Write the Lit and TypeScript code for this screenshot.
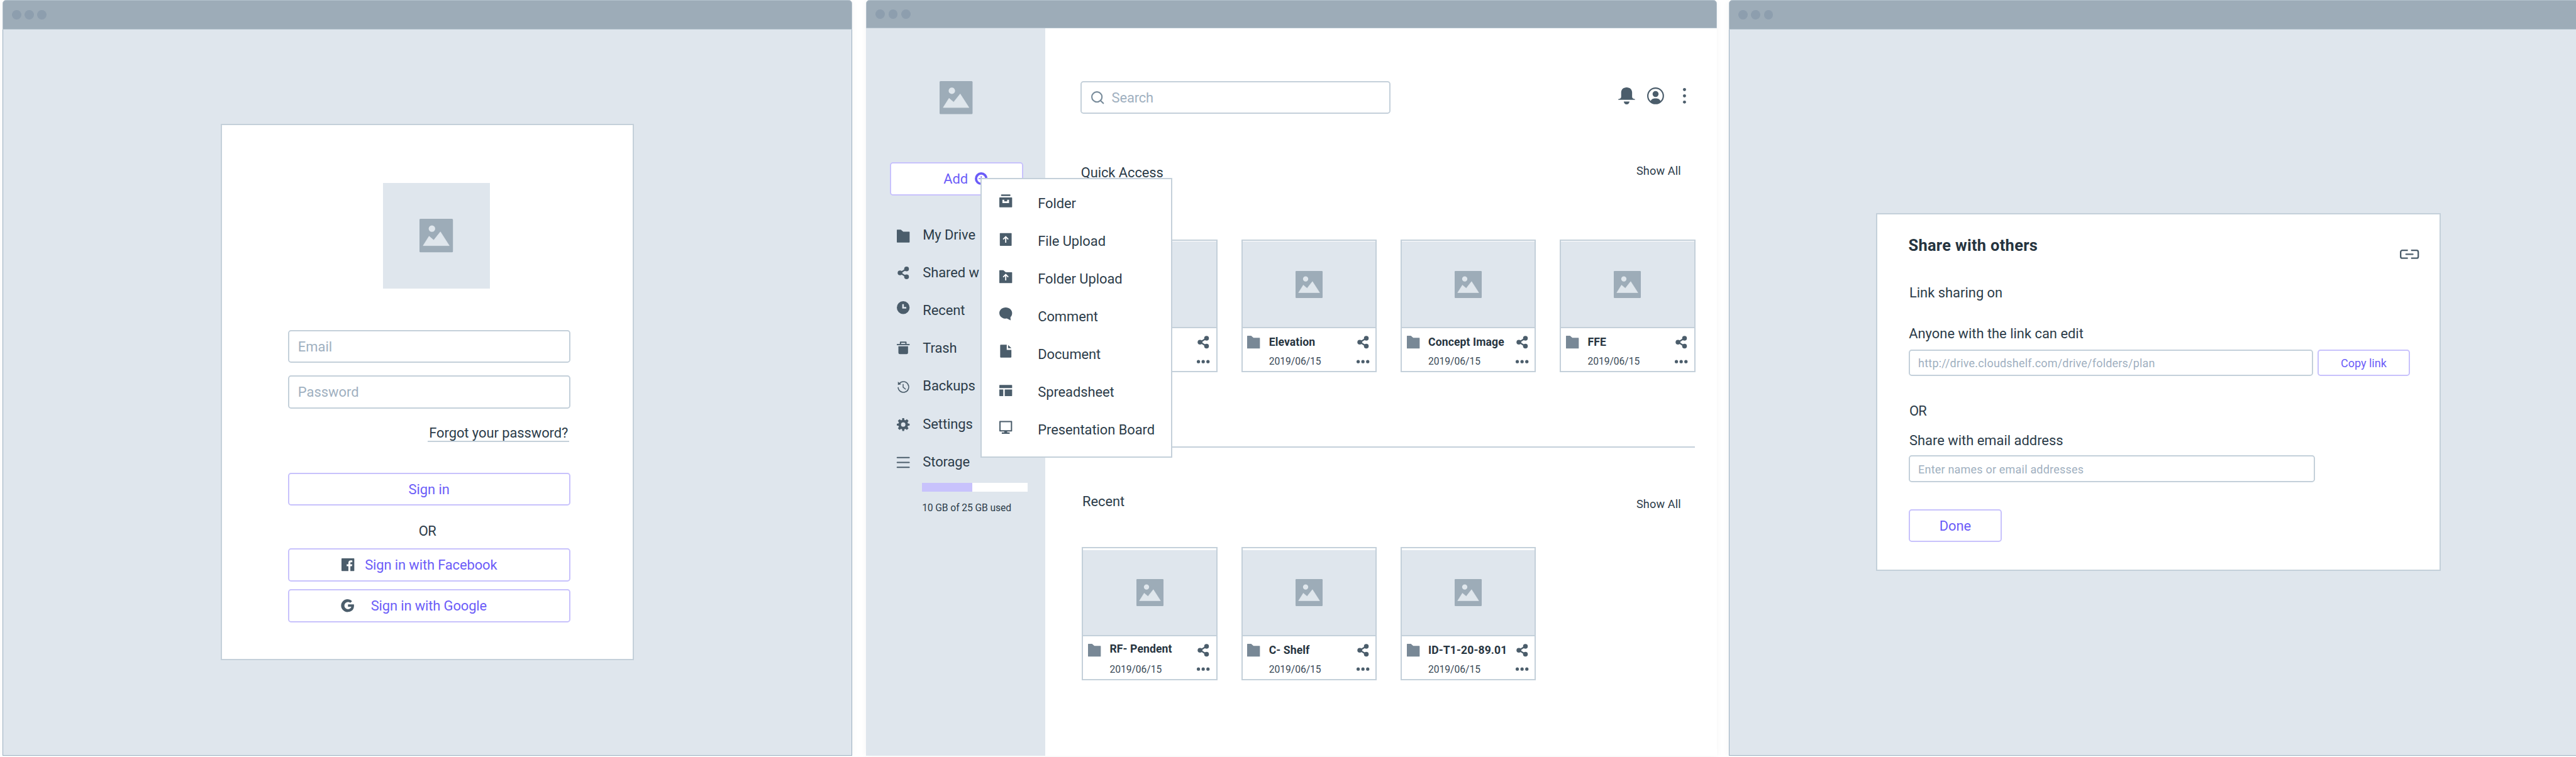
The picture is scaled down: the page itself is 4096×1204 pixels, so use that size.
import { LitElement, html, svg, unsafeCSS, nothing, TemplateResult, SVGTemplateResult } from "lit";
import { customElement, property } from "lit/decorators.js";

/** Board scale: "u" lengths in the style sheets are design pixels. */
const SCALE = 4096 / 5234;

function sheet(strings: TemplateStringsArray) {
  const text = strings.raw.join("");
  return unsafeCSS(
    text.replace(/(\d*\.?\d+)u\b/g, (_m, n) => `${(parseFloat(n) * SCALE).toFixed(3)}px`)
  );
}

const ICONS: Record<string, { box: string; art: SVGTemplateResult }> = {
  image: {
    box: "0 0 68 68",
    art: svg`<rect width="68" height="68" rx="2"/><circle cx="25.300" cy="20" r="6.600" fill="#dfe6ec"/>
      <path d="M7.500 54.500L19.500 35.500l9.500 8L42.500 26.500L60.500 54.500z" fill="#dfe6ec" stroke="#dfe6ec" stroke-width="1" stroke-linejoin="round"/>`,
  },
  folder: { box: "0 0 26 26", art: svg`<path d="M0 .8A.8.8 0 0 1 .8 0H8.200L13 4H25.200a.8.8 0 0 1 .8.8V25.200a.8.8 0 0 1-.8.8H.8a.8.8 0 0 1-.8-.8z"/>` },
  share: {
    box: "0 0 26 26",
    art: svg`<path d="M19.500 5L7 13l12.500 8" fill="none" stroke="currentColor" stroke-width="3"/>
      <circle cx="19.800" cy="5" r="4.800"/><circle cx="6.500" cy="13" r="4.800"/><circle cx="19.800" cy="21" r="4.800"/>`,
  },
  clock: { box: "0 0 26 26", art: svg`<path fill-rule="evenodd" d="M13 0a13 13 0 1 0 0 26a13 13 0 0 0 0-26zM11 6h3.300v5.700H19.200v3.200H11z"/>` },
  trash: {
    box: "0 0 26 26",
    art: svg`<path d="M0 5.300h26v2.400H0z"/><path d="M7.500 5.500V1.500h11v4" fill="none" stroke="currentColor" stroke-width="2.600" stroke-linejoin="round"/>
      <path d="M3.200 9.800H22.800V23a3 3 0 0 1-3 3H6.200a3 3 0 0 1-3-3z"/>`,
  },
  history: {
    box: "0 0 26 26",
    art: svg`<path d="M2.600 13.500A10.800 10.800 0 1 0 5 6.200" fill="none" stroke="currentColor" stroke-width="2"/>
      <path d="M2.200 2.200V8.800L9 7.600z"/><path d="M12.800 7v6.500l5.400 4.300" fill="none" stroke="currentColor" stroke-width="1.900"/>`,
  },
  gear: {
    box: "0 0 26 26",
    art: svg`<path fill-rule="evenodd" d="M11.200 0h3.600l.6 3.600 1.900.8L20.400 2l3.400 3.400-2.100 3.300.8 2 3.500.6v3.500l-3.500.6-.8 2 2.100 3.200-3.400 3.400-3.100-2.300-1.900.8-.6 3.500h-3.600l-.6-3.500-1.900-.8L5.600 24l-3.400-3.400 2.100-3.200-.8-2L0 14.800v-3.500l3.500-.6.8-2-2.100-3.300L5.600 2l3.100 2.400 1.900-.8zM13 8.600a4.500 4.500 0 1 0 0 9a4.500 4.500 0 0 0 0-9z"/>`,
  },
  bars: { box: "0 0 26 26", art: svg`<path d="M1 3.100H25M1 13H25M1 22.900H25" stroke="currentColor" stroke-width="2.700" stroke-linecap="round"/>` },
  archive: {
    box: "0 0 26 26",
    art: svg`<rect x="3.400" y="0" width="19.200" height="3" rx="1.200"/>
      <path fill-rule="evenodd" d="M1 6H25a1 1 0 0 1 1 1V25a1 1 0 0 1-1 1H1a1 1 0 0 1-1-1V7a1 1 0 0 1 1-1zM6.300 10.700v6.900H19.700V10.700H16v3.200H10V10.700z"/>`,
  },
  fileUp: {
    box: "0 0 26 26",
    art: svg`<rect x="1" y="0" width="24" height="26" rx="1"/><path d="M13 19.500V8.500M7.800 12.800L13 7.600l5.200 5.200" fill="none" stroke="#fff" stroke-width="2.300"/>`,
  },
  folderUp: {
    box: "0 0 26 26",
    art: svg`<path d="M0 .8A.8.8 0 0 1 .8 0H8.200L13 4H25.200a.8.8 0 0 1 .8.8V25.200a.8.8 0 0 1-.8.8H.8a.8.8 0 0 1-.8-.8z"/>
      <path d="M13 20.500V9.500M7.800 13.800L13 8.600l5.200 5.200" fill="none" stroke="#fff" stroke-width="2.300"/>`,
  },
  comment: { box: "0 0 26 26", art: svg`<path d="M13 0C5.800 0 0 5 0 11.300S5.800 22.600 13 22.600c.8 0 1.600-.1 2.300-.2L23 26l-.4-6.200C24.700 17.700 26 14.700 26 11.300C26 5 20.200 0 13 0z"/>` },
  doc: { box: "0 0 26 26", art: svg`<path d="M3 0H15V10.500H24.500V25a1 1 0 0 1-1 1H2.700a1 1 0 0 1-1-1V1.300A1.300 1.300 0 0 1 3 0zM17.800 .5L24.600 6.800H17.800z"/>` },
  table: { box: "0 0 26 26", art: svg`<path d="M1 1.700H25a1 1 0 0 1 1 1V8H0V2.700a1 1 0 0 1 1-1zM0 11H8V24.300H1a1 1 0 0 1-1-1zM11 11H26V23.300a1 1 0 0 1-1 1H11z"/>` },
  monitor: {
    box: "0 0 26 26",
    art: svg`<path fill-rule="evenodd" d="M1 0H25a1 1 0 0 1 1 1V20.400a1 1 0 0 1-1 1H16V23.300H21V26H5V23.300H10V21.400H1a1 1 0 0 1-1-1V1a1 1 0 0 1 1-1zM2.600 2.600V18.700H23.400V2.600z"/>`,
  },
  facebook: {
    box: "0 0 26 26",
    art: svg`<path fill-rule="evenodd" d="M1 0H25a1 1 0 0 1 1 1V25a1 1 0 0 1-1 1H18V16H21.300L21.900 12.100H18V9.600C18 8.400 18.500 7.900 19.700 7.900H22V4.400C21.300 4.300 20.300 4.200 19.200 4.200C16 4.200 14 6.100 14 9.300V12.100H10.500V16H14V26H1a1 1 0 0 1-1-1V1a1 1 0 0 1 1-1z"/>`,
  },
  google: {
    box: "0 0 26 26",
    art: svg`<path d="M13.200 10.700V15.400H20C19.100 18.300 16.800 20.300 13.200 20.300A7.300 7.300 0 1 1 17.900 7.500L21.500 4A13 13 0 1 0 13.200 26C21.500 26 26.500 19.800 25.300 10.700z"/>`,
  },
  plusCircle: {
    box: "0 0 26 26",
    art: svg`<circle cx="13" cy="13" r="10.500" fill="none" stroke="currentColor" stroke-width="4.900"/><path d="M13 7.800v10.400M7.800 13h10.400" stroke="currentColor" stroke-width="1.500"/>`,
  },
  search: {
    box: "0 0 26 26",
    art: svg`<circle cx="11.700" cy="11.700" r="10.300" fill="none" stroke="currentColor" stroke-width="2.700"/><path d="M18.700 18.700L24.700 24.700" stroke="currentColor" stroke-width="2.700" stroke-linecap="round"/>`,
  },
  bell: {
    box: "0 0 34 34",
    art: svg`<path d="M17 0C10.300 0 6 4.500 6 10.300V19C6 21.500 4.500 22.500 1 23.300C-.3 23.700-.2 25 1 25H33c1.200 0 1.300-1.300 0-1.700C29.500 22.500 28 21.500 28 19V10.300C28 4.500 23.700 0 17 0z"/>
      <path d="M11.200 28.300H22.800C22.300 31.500 20.300 34 17 34S11.700 31.500 11.200 28.300z"/>`,
  },
  user: {
    box: "0 0 34 34",
    art: svg`<circle cx="17" cy="17" r="15.600" fill="none" stroke="currentColor" stroke-width="2.700"/><circle cx="17" cy="13.300" r="6"/>
      <path d="M6.500 28.500C8.300 23.500 12 22 17 22s8.700 1.500 10.500 6.500C24.500 31.500 20.800 33 17 33S9.500 31.500 6.500 28.500z"/>`,
  },
  kebab: { box: "0 0 34 34", art: svg`<circle cx="17" cy="4.400" r="3.100"/><circle cx="17" cy="17.100" r="3.100"/><circle cx="17" cy="29.500" r="3.100"/>` },
  more: { box: "0 0 26 26", art: svg`<circle cx="3.300" cy="13" r="3.300"/><circle cx="13" cy="13" r="3.300"/><circle cx="22.700" cy="13" r="3.300"/>` },
  link: {
    box: "0 0 39 19",
    art: svg`<path d="M16.200 1.500H5a3.500 3.500 0 0 0-3.500 3.500V14A3.500 3.500 0 0 0 5 17.500H16.200M22.800 1.500H34A3.500 3.500 0 0 1 37.500 5V14A3.500 3.500 0 0 1 34 17.500H22.800" fill="none" stroke="currentColor" stroke-width="3"/>
      <path d="M12.500 9.500H26.500" stroke="currentColor" stroke-width="2.800" stroke-linecap="round"/>`,
  },
};

/** Draws a glyph; dy nudges the artwork inside its box. */
const icon = (name: string, cls = "", dy = 0): TemplateResult => html`
  <svg class="icon ${cls}" viewBox=${ICONS[name].box} fill="currentColor" aria-hidden="true">
    <g transform="translate(0 ${dy})">${ICONS[name].art}</g>
  </svg>`;

const shared = sheet`
  * { box-sizing: border-box; }
  .icon { display: block; flex: none; width: 26u; height: 26u; overflow: visible; color: #4b5d6b; }
  .field, .button {
    display: flex; align-items: center; height: 67u; border: 2.9u solid #c4d0da; border-radius: 6u;
    background: #fff; color: #9fb0c0; padding: 1.5u 18u 0; flex: none;
  }
  .button { border-color: #c8c2fc; color: #6b5cf8; justify-content: center; padding: 1.5u 0 0; }
`;

@customElement("browser-window")
export class BrowserWindow extends LitElement {
  static styles = [
    shared,
    sheet`
    :host { display: flex; flex-direction: column; flex: none; height: 1536u; border-radius: 7u 7u 0 0; box-shadow: 0 0 14u rgba(0, 0, 0, 0.045); }
    .bar {
      display: flex; align-items: center; gap: 6.800u; flex: none; height: 60u; padding-left: 18.500u;
      background: #9dacb8; border: 1.300u solid #b4c2cd; border-radius: 7u 7u 0 0;
    }
    :host([compact]) .bar { height: 58u; }
    .dot { width: 19u; height: 19u; border-radius: 50%; background: #8d9eae; }
    .body { flex: 1; position: relative; display: flex; min-height: 0; background: #dfe6ed; border: 1.300u solid #9db1c2; border-top: 0; }
    :host([compact]) .body { border: 0; background: #fff; }
  `,
  ];
  render() {
    return html`<div class="bar"><i class="dot"></i><i class="dot"></i><i class="dot"></i></div>
      <div class="body"><slot></slot></div>`;
  }
}

@customElement("sign-in-card")
export class SignInCard extends LitElement {
  static styles = [
    shared,
    sheet`
    :host { display: block; }
    .card {
      display: flex; flex-direction: column; width: 840.500u; height: 1090u; margin: 191.500u 0 0 442.300u;
      padding: 117.400u 127.600u 0 134.200u; background: #fff; border: 2.900u solid #c4d0da;
    }
    .logo { display: flex; flex: none; align-items: center; justify-content: center; width: 217u; height: 214.500u; margin: 0 0 85u 193.300u; background: #dfe6ed; }
    .logo .icon { width: 68u; height: 68u; color: #9dacb8; }
    .gap-a { margin-bottom: 25.100u; }
    .forgot {
      align-self: flex-end; width: 287.700u; margin: 35.400u 1.600u 62u 0; line-height: 31u; color: #2c3c49;
      text-align: center; white-space: nowrap; border-bottom: 2.900u solid #c4d0da; letter-spacing: -0.080u;
    }
    .or { margin: 34.800u 7u 20u 0; line-height: 32u; text-align: center; color: #2c3c49; letter-spacing: -0.700u; }
    .social { justify-content: flex-start; padding-left: 107u; gap: 21u; margin-bottom: 16u; letter-spacing: -0.150u; }
    .google { gap: 33u; }
    .social .icon { margin-bottom: 1.500u; }
  `,
  ];
  render() {
    return html`<div class="card">
      <div class="logo">${icon("image")}</div>
      <div class="field gap-a">Email</div>
      <div class="field">Password</div>
      <div class="forgot">Forgot your password?</div>
      <div class="button">Sign in</div>
      <div class="or">OR</div>
      <div class="button social">${icon("facebook")}<span>Sign in with Facebook</span></div>
      <div class="button social google">${icon("google")}<span>Sign in with Google</span></div>
    </div>`;
  }
}

@customElement("file-card")
export class FileCard extends LitElement {
  @property() name = "";
  @property() date = "";
  static styles = [
    shared,
    sheet`
    :host { display: flex; flex-direction: column; flex: none; width: 275.500u; height: 270.500u; border: 3u solid #c4d0da; background: #fff; padding-top: 2.300u; }
    :host([spaced]) { padding-top: 3.700u; }
    .preview { flex: 1; display: flex; align-items: center; justify-content: center; background: #dfe6ed; border-bottom: 3u solid #c4d0da; }
    .preview .icon { width: 55u; height: 55u; color: #9dacb8; }
    .meta { display: flex; flex: none; height: 86.700u; padding: 15.500u 13u 0 10u; }
    .folder { color: #788896; }
    .text { flex: 1; min-width: 0; padding-left: 18u; white-space: nowrap; }
    .title { display: block; height: 26u; margin-bottom: 13u; font-size: 22.500u; font-weight: 700; line-height: 28u; color: #26343f; letter-spacing: 0.120u; }
    :host([raised]) .title { line-height: 22.500u; }
    .date { display: block; font-size: 20u; line-height: 25u; color: #3a4a57; letter-spacing: -0.050u; }
    .tools { display: flex; flex-direction: column; gap: 12.500u; }
  `,
  ];
  render() {
    return html`<div class="preview">${icon("image")}</div>
      <div class="meta">
        ${icon("folder", "folder")}
        <div class="text">${this.name ? html`<b class="title">${this.name}</b><span class="date">${this.date}</span>` : nothing}</div>
        <div class="tools">${icon("share")}${icon("more")}</div>
      </div>`;
  }
}

type Entry = { label: string; icon: string; dy: number };

const NAV: Entry[] = [
  { label: "My Drive", icon: "folder", dy: 3 },
  { label: "Shared w", icon: "share", dy: 1 },
  { label: "Recent", icon: "clock", dy: -5 },
  { label: "Trash", icon: "trash", dy: 0 },
  { label: "Backups", icon: "history", dy: 3 },
  { label: "Settings", icon: "gear", dy: 1.4 },
  { label: "Storage", icon: "bars", dy: 1.7 },
];

const ADD_MENU: Entry[] = [
  { label: "Folder", icon: "archive", dy: -4.7 },
  { label: "File Upload", icon: "fileUp", dy: -3 },
  { label: "Folder Upload", icon: "folderUp", dy: -4 },
  { label: "Comment", icon: "comment", dy: -5 },
  { label: "Document", icon: "doc", dy: -6 },
  { label: "Spreadsheet", icon: "table", dy: -2.6 },
  { label: "Presentation Board", icon: "monitor", dy: -4.4 },
];

const DATE = "2019/06/15";

@customElement("drive-screen")
export class DriveScreen extends LitElement {
  static styles = [
    shared,
    sheet`
    :host { display: flex; flex: 1; color: #2c3c49; letter-spacing: -0.080u; }
    .side { display: flex; flex-direction: column; flex: none; width: 364.600u; background: #dfe6ed; }
    .mark { width: 67u; height: 67u; margin: 106.300u 0 98.700u 149.800u; color: #9dacb8; }
    .add { width: 271.600u; margin-left: 48.500u; justify-content: flex-start; padding-left: 106.500u; gap: 13.500u; }
    .add .icon { color: #6b5cf8; margin-bottom: 1.500u; }
    .nav { padding: 41.800u 0 0 62.500u; }
    .row { display: flex; align-items: center; gap: 27u; height: 76.750u; white-space: nowrap; }
    .row span { padding-top: 1.800u; }
    .meter { width: 214.200u; height: 18.400u; margin: 5u 0 20.500u 114.100u; background: #fff; }
    .used { width: 47.600%; height: 100%; background: #c8c2fc; }
    .quota { margin-left: 114u; font-size: 20u; line-height: 25u; letter-spacing: -0.120u; }
    .main { flex: 1; padding: 106.700u 0 0 71.100u; }
    .top { display: flex; align-items: center; height: 67u; }
    .search { width: 629.500u; gap: 15.500u; padding-left: 19.500u; letter-spacing: -0.200u; }
    .search .icon { color: #788b9a; margin-bottom: 1.500u; }
    .actions { display: flex; gap: 24.100u; padding: 0 0 8u 463.500u; }
    .actions .icon { width: 34.400u; height: 34.400u; }
    .head { display: flex; justify-content: space-between; align-items: center; width: 1220.200u; height: 40u; margin-top: 98.400u; padding: 1.800u 0 0 1u; }
    .more { font-size: 23.200u; padding-bottom: 6.600u; letter-spacing: 0.150u; }
    .head.second { margin-top: 89.100u; padding-left: 4u; }
    .second .more { padding: 10u 0 0; }
    .files { display: flex; gap: 48.200u; padding: 116.200u 0 0 3u; }
    .files.second { padding-top: 72.800u; }
    .rule { width: 1245u; height: 3u; margin: 150.300u 0 0 3u; background: #c4d0da; }
    .menu {
      position: absolute; left: 232.300u; top: 304.200u; width: 390u; height: 568u; padding: 9.800u 0 0 35.600u;
      background: #fff; border: 2.900u solid #c4d0da;
    }
    .menu .row { gap: 52.800u; }
  `,
  ];
  row(e: Entry) {
    return html`<div class="row">${icon(e.icon, "", e.dy)}<span>${e.label}</span></div>`;
  }
  render() {
    return html`
      <div class="side">
        ${icon("image", "mark")}
        <div class="button add"><span>Add</span>${icon("plusCircle")}</div>
        <div class="nav">${NAV.map((e) => this.row(e))}</div>
        <div class="meter"><div class="used"></div></div>
        <div class="quota">10 GB of 25 GB used</div>
      </div>
      <div class="main">
        <div class="top">
          <div class="field search">${icon("search")}<span>Search</span></div>
          <div class="actions">${icon("bell")}${icon("user")}${icon("kebab")}</div>
        </div>
        <div class="head"><span>Quick Access</span><span class="more">Show All</span></div>
        <div class="files">
          <file-card></file-card>
          <file-card name="Elevation" date=${DATE}></file-card>
          <file-card name="Concept Image" date=${DATE}></file-card>
          <file-card name="FFE" date=${DATE}></file-card>
        </div>
        <div class="rule"></div>
        <div class="head second"><span>Recent</span><span class="more">Show All</span></div>
        <div class="files second">
          <file-card spaced raised name="RF- Pendent" date=${DATE}></file-card>
          <file-card spaced name="C- Shelf" date=${DATE}></file-card>
          <file-card spaced name="ID-T1-20-89.01" date=${DATE}></file-card>
        </div>
      </div>
      <div class="menu">${ADD_MENU.map((e) => this.row(e))}</div>`;
  }
}

@customElement("share-dialog")
export class ShareDialog extends LitElement {
  static styles = [
    shared,
    sheet`
    :host { display: block; color: #2c3c49; }
    .card {
      display: flex; flex-direction: column; width: 1147.800u; height: 726.500u; margin: 373.500u 0 0 298u;
      padding: 41.900u 0 0 64.200u; background: #fff; border: 2.900u solid #c4d0da;
    }
    .head { display: flex; justify-content: space-between; width: 1036.500u; height: 40u; }
    .title { font-size: 32.500u; font-weight: 700; line-height: 41u; color: #26343f; letter-spacing: 0.400u; margin-left: -1u; }
    .icon { width: 38.800u; height: 19u; margin-top: 29.300u; }
    .line { line-height: 33.500u; height: 32u; padding-left: 1u; }
    .sharing { margin: 61.300u 0 51u; }
    .anyone { margin-bottom: 16u; padding: 0; }
    .or { margin: 54.500u 0 28.700u; letter-spacing: -1u; }
    .mail { margin-bottom: 14.100u; }
    .pair { display: flex; gap: 7.900u; }
    .field, .copy { height: 54.300u; font-size: 23u; padding: 1.500u 0 0 16.500u; letter-spacing: 0.260u; }
    .url { width: 821.900u; }
    .names { width: 825.300u; }
    .copy { width: 188.800u; padding: 1.500u 0 0; letter-spacing: 0; }
    .done { width: 188.500u; margin-top: 54.900u; }
  `,
  ];
  render() {
    return html`<div class="card">
      <div class="head"><span class="title">Share with others</span>${icon("link")}</div>
      <div class="line sharing">Link sharing on</div>
      <div class="line anyone">Anyone with the link can edit</div>
      <div class="pair">
        <div class="field url">http://drive.cloudshelf.com/drive/folders/plan</div>
        <div class="button copy">Copy link</div>
      </div>
      <div class="line or">OR</div>
      <div class="line mail">Share with email address</div>
      <div class="field names">Enter names or email addresses</div>
      <div class="button done">Done</div>
    </div>`;
  }
}

@customElement("app-root")
export class AppRoot extends LitElement {
  static styles = [
    shared,
    sheet`
    :host {
      box-sizing: border-box; display: flex; width: 5234u; height: 1538u; padding-left: 4.600u; overflow: hidden; background: #fff;
      font-family: Roboto, "Liberation Sans", sans-serif; font-size: 28u; line-height: 1.172;
    }
    .first { width: 1727.500u; margin-right: 27.400u; }
    .second { width: 1728.500u; margin-right: 24.500u; }
    .third { width: 1728u; }
  `,
  ];
  render() {
    return html`
      <browser-window class="first"><sign-in-card></sign-in-card></browser-window>
      <browser-window class="second" compact><drive-screen></drive-screen></browser-window>
      <browser-window class="third"><share-dialog></share-dialog></browser-window>`;
  }
}
